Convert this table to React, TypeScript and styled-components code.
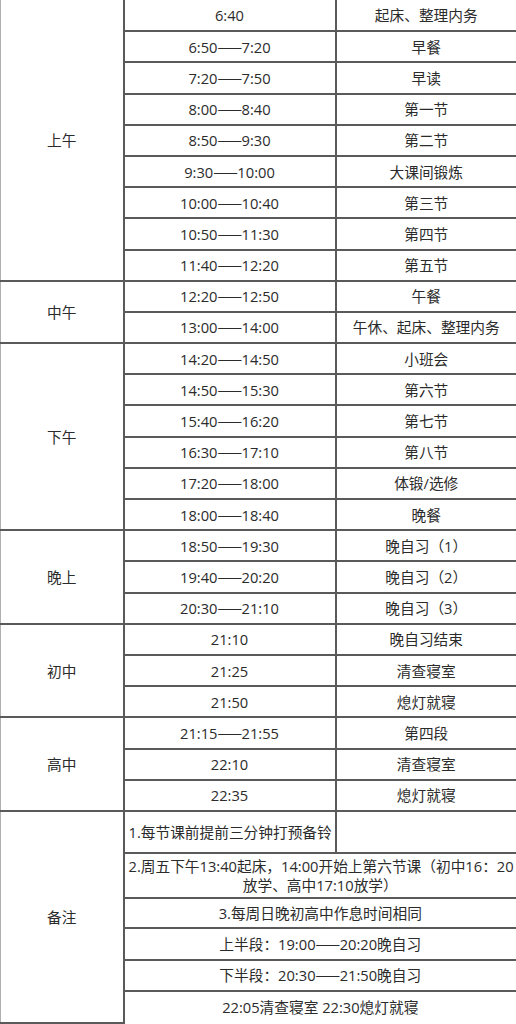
import React from 'react'
import styled, { createGlobalStyle } from 'styled-components'

const GlobalStyle = createGlobalStyle`
  html, body {
    margin: 0;
    padding: 0;
    background: #ffffff;
  }
  body {
    font-family: "Open Sans", "Noto Sans CJK SC", sans-serif;
    color: #2b2b2b;
  }
`

type Section = {
  label: string
  rows: [string, string][]
}

const schedule: Section[] = [
  {
    label: '上午',
    rows: [
      ['6:40', '起床、整理内务'],
      ['6:50——7:20', '早餐'],
      ['7:20——7:50', '早读'],
      ['8:00——8:40', '第一节'],
      ['8:50——9:30', '第二节'],
      ['9:30——10:00', '大课间锻炼'],
      ['10:00——10:40', '第三节'],
      ['10:50——11:30', '第四节'],
      ['11:40——12:20', '第五节'],
    ],
  },
  {
    label: '中午',
    rows: [
      ['12:20——12:50', '午餐'],
      ['13:00——14:00', '午休、起床、整理内务'],
    ],
  },
  {
    label: '下午',
    rows: [
      ['14:20——14:50', '小班会'],
      ['14:50——15:30', '第六节'],
      ['15:40——16:20', '第七节'],
      ['16:30——17:10', '第八节'],
      ['17:20——18:00', '体锻/选修'],
      ['18:00——18:40', '晚餐'],
    ],
  },
  {
    label: '晚上',
    rows: [
      ['18:50——19:30', '晚自习（1）'],
      ['19:40——20:20', '晚自习（2）'],
      ['20:30——21:10', '晚自习（3）'],
    ],
  },
  {
    label: '初中',
    rows: [
      ['21:10', '晚自习结束'],
      ['21:25', '清查寝室'],
      ['21:50', '熄灯就寝'],
    ],
  },
  {
    label: '高中',
    rows: [
      ['21:15——21:55', '第四段'],
      ['22:10', '清查寝室'],
      ['22:35', '熄灯就寝'],
    ],
  },
]

const notes = [
  { text: '3.每周日晚初高中作息时间相同', height: 30 },
  { text: '上半段：19:00——20:20晚自习', height: 32 },
  { text: '下半段：20:30——21:50晚自习', height: 31 },
  { text: '22:05清查寝室 22:30熄灯就寝', height: 32 },
]

const Table = styled.table`
  width: 516px;
  table-layout: fixed;
  border-collapse: collapse;
  font-size: 14.7px;
  line-height: 20px;
`

const Row = styled.tr<{ $h: number }>`
  height: ${({ $h }) => $h}px;
  &:first-child td {
    border-top: none;
  }
`

const LastRow = styled(Row)`
  td {
    border-bottom: none;
  }
`

const Cell = styled.td`
  padding: 0 4px;
  border: 2px solid #5a5a5a;
  text-align: center;
  vertical-align: middle;
  white-space: nowrap;
  &:first-child {
    border-left: 1px solid #b0b0b0;
  }
  &:last-child {
    border-right: 1px solid #b0b0b0;
  }
`

const LabelCell = styled(Cell)`
  border-left: 1px solid #b0b0b0;
`

/* the two-line note, split over two rows with no rule between them */
const NoteHead = styled(Cell)`
  vertical-align: bottom;
  line-height: 19px;
  border-bottom: none;
`

const NoteTail = styled(Cell)`
  vertical-align: top;
  line-height: 19px;
  border-top: none;
`

const Dash = styled.span`
  font-family: "Noto Sans CJK SC", sans-serif;
  letter-spacing: -0.5px;
`

const withDash = (text: string) => {
  const parts = text.split('——')
  if (parts.length === 1) return text
  return (
    <>
      {parts[0]}
      <Dash>——</Dash>
      {parts[1]}
    </>
  )
}

const ROW_H = 31.2

const App: React.FC = () => (
  <>
    <GlobalStyle />
    <Table>
      <colgroup>
        <col style={{ width: 123 }} />
        <col style={{ width: 212 }} />
        <col style={{ width: 181 }} />
      </colgroup>
      <tbody>
        {schedule.map(({ label, rows }) =>
          rows.map(([time, activity], i) => (
            <Row key={label + time} $h={ROW_H}>
              {i === 0 && <LabelCell rowSpan={rows.length}>{label}</LabelCell>}
              <Cell>{withDash(time)}</Cell>
              <Cell>{activity}</Cell>
            </Row>
          ))
        )}
        <Row $h={42}>
          <LabelCell rowSpan={7}>备注</LabelCell>
          <Cell>1.每节课前提前三分钟打预备铃</Cell>
          <Cell />
        </Row>
        <Row $h={23}>
          <NoteHead colSpan={2}>2.周五下午13:40起床，14:00开始上第六节课（初中16：20</NoteHead>
        </Row>
        <Row $h={22}>
          <NoteTail colSpan={2}>放学、高中17:10放学）</NoteTail>
        </Row>
        {notes.map(({ text, height }, i) =>
          i === notes.length - 1 ? (
            <LastRow key={text} $h={height}>
              <Cell colSpan={2}>{withDash(text)}</Cell>
            </LastRow>
          ) : (
            <Row key={text} $h={height}>
              <Cell colSpan={2}>{withDash(text)}</Cell>
            </Row>
          )
        )}
      </tbody>
    </Table>
  </>
)

export default App
